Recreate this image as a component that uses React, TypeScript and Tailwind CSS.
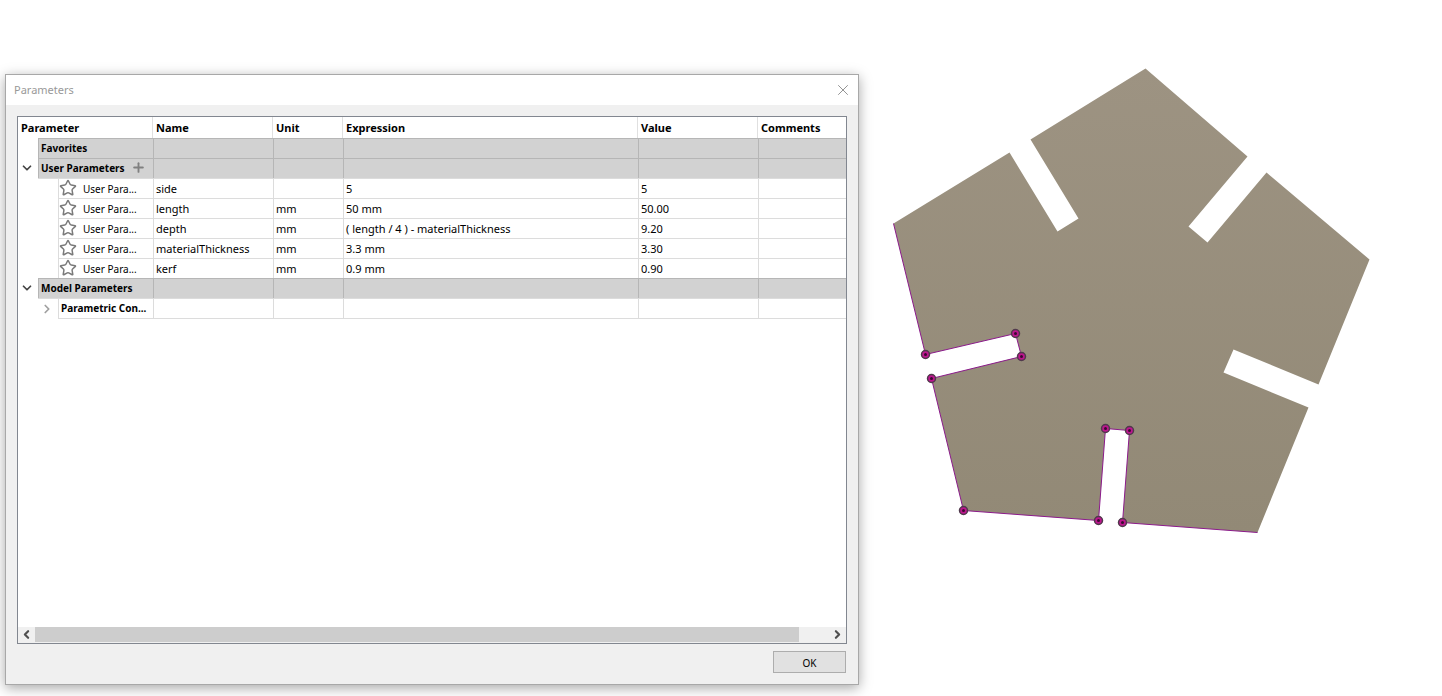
import { ChevronDown, ChevronLeft, ChevronRight, Plus, Star, X } from 'lucide-react'

interface Parameter {
  name: string
  unit: string
  expression: string
  value: string
}

const parameters: Parameter[] = [
  { name: 'side', unit: '', expression: '5', value: '5' },
  { name: 'length', unit: 'mm', expression: '50 mm', value: '50.00' },
  { name: 'depth', unit: 'mm', expression: '( length / 4 ) - materialThickness', value: '9.20' },
  { name: 'materialThickness', unit: 'mm', expression: '3.3 mm', value: '3.30' },
  { name: 'kerf', unit: 'mm', expression: '0.9 mm', value: '0.90' },
]

const headers = ['Name', 'Unit', 'Expression', 'Value', 'Comments']

// endpoints of the highlighted sketch lines
const points = [
  [925, 354],
  [1015, 333],
  [1021, 356],
  [931, 378],
  [963, 510],
  [1098, 520],
  [1105, 428],
  [1129, 430],
  [1122, 522],
]

function GroupRow({
  title,
  expandable = false,
  canAdd = false,
}: {
  title: string
  expandable?: boolean
  canAdd?: boolean
}) {
  return (
    <tr className="h-5">
      <th scope="rowgroup" className="p-0 text-left">
        <div className="flex h-5">
          <span className="flex w-5 items-center justify-center pr-0.5">
            {expandable && (
              <button type="button" aria-label={`Collapse ${title}`}>
                <ChevronDown size={14} strokeWidth={3} className="text-[#444444]" />
              </button>
            )}
          </span>
          <span className="flex flex-1 items-center gap-1.5 border-t border-l border-[#b6b6b6] bg-[#d2d2d2] pl-0.5 text-[10px]">
            {title}
            {canAdd && (
              <button type="button" aria-label="Add user parameter" className="pb-0.5">
                <Plus size={15} strokeWidth={3} className="text-[#808080]" />
              </button>
            )}
          </span>
        </div>
      </th>
      {headers.map((h) => (
        <td key={h} className="border-t border-l border-[#b6b6b6] bg-[#d2d2d2] p-0" />
      ))}
    </tr>
  )
}

function ParameterRow({ parameter, first }: { parameter: Parameter; first: boolean }) {
  const cells = [parameter.name, parameter.unit, parameter.expression, parameter.value, '']
  return (
    <tr className="h-5">
      <td className="p-0">
        <div className="flex h-5">
          <span className="w-5" />
          <span className={first ? 'w-5 border-t border-[#dcdcdc]' : 'w-5'} />
          <span className="flex flex-1 items-center gap-1.5 border-t border-l border-[#dcdcdc] text-[10px]">
            <button type="button" aria-label={`Favorite ${parameter.name}`} className="pb-0.5">
              <Star
                size={18}
                strokeWidth={2}
                strokeLinejoin="miter"
                className="text-[#7a7a7a]"
              />
            </button>
            <span className="pt-0.5">User Para...</span>
          </span>
        </div>
      </td>
      {cells.map((cell, i) => (
        <td key={headers[i]} className="border-t border-l border-[#dcdcdc] p-0 pl-0.5 leading-4">
          {cell}
        </td>
      ))}
    </tr>
  )
}

function ParameterTable() {
  return (
    <table className="w-full table-fixed border-separate border-spacing-0 text-[11px] whitespace-nowrap text-black">
      <colgroup>
        <col className="w-[135px]" />
        <col className="w-[120px]" />
        <col className="w-[70px]" />
        <col className="w-[295px]" />
        <col className="w-[120px]" />
        <col />
      </colgroup>
      <thead>
        <tr className="h-[21px] text-left">
          <th scope="col" className="border-r border-[#e0e0e0] p-0 pt-0.5 pl-[3px]">
            Parameter
          </th>
          {headers.map((h) => (
            <th
              key={h}
              scope="col"
              className="border-r border-[#e0e0e0] p-0 pt-0.5 pl-[3px] last:border-r-0"
            >
              {h}
            </th>
          ))}
        </tr>
      </thead>
      <tbody>
        <GroupRow title="Favorites" />
        <GroupRow title="User Parameters" expandable canAdd />
        {parameters.map((p, i) => (
          <ParameterRow key={p.name} parameter={p} first={i === 0} />
        ))}
        <GroupRow title="Model Parameters" expandable />
        <tr className="h-[21px]">
          <th scope="row" className="p-0 text-left">
            <div className="flex h-[21px]">
              <span className="w-5" />
              <span className="flex w-5 items-center justify-center border-t border-[#dcdcdc] pr-0.5">
                <button type="button" aria-label="Expand component">
                  <ChevronRight size={14} strokeWidth={3} className="text-[#a0a0a0]" />
                </button>
              </span>
              <span className="flex flex-1 items-center border-y border-l border-[#dcdcdc] pl-0.5 text-[10px]">
                Parametric Con...
              </span>
            </div>
          </th>
          {headers.map((h) => (
            <td key={h} className="border-y border-l border-[#dcdcdc] p-0" />
          ))}
        </tr>
      </tbody>
    </table>
  )
}

function ParametersDialog() {
  return (
    <section
      role="dialog"
      aria-labelledby="dialog-title"
      className="relative flex flex-1 flex-col border border-[#a8a8a8] bg-[#f0f0f0] shadow-[0_3px_12px_rgba(0,0,0,0.35)]"
    >
      <header className="flex h-[30px] items-center justify-between bg-white pr-1.5 pl-2">
        <h1 id="dialog-title" className="text-[11px] text-[#999999]">
          Parameters
        </h1>
        <button type="button" aria-label="Close">
          <X size={18} strokeWidth={1} className="text-[#707070]" />
        </button>
      </header>
      <div className="flex flex-1 flex-col px-[11px] pt-[11px] pb-[11px]">
        <div className="flex flex-1 flex-col justify-between border border-[#828790] bg-white">
          <ParameterTable />
          <div className="flex h-4 bg-[#f0f0f0] pb-px">
            <button
              type="button"
              aria-label="Scroll left"
              className="flex w-[17px] items-center justify-center"
            >
              <ChevronLeft size={13} strokeWidth={4} className="text-[#505050]" />
            </button>
            <div className="flex-1">
              <div className="h-full w-[96.2%] bg-[#cdcdcd]" />
            </div>
            <button
              type="button"
              aria-label="Scroll right"
              className="flex w-[17px] items-center justify-center"
            >
              <ChevronRight size={13} strokeWidth={4} className="text-[#505050]" />
            </button>
          </div>
        </div>
        <button
          type="button"
          className="mt-[7px] mr-px h-[22px] w-[73px] self-end border border-[#adadad] bg-[#e1e1e1] pt-0.5 text-[10px] text-black"
        >
          OK
        </button>
      </div>
    </section>
  )
}

function PentagonSketch() {
  return (
    <svg
      viewBox="859 0 583 696"
      className="w-full self-start"
      role="img"
      aria-label="Slotted pentagon"
    >
      <defs>
        <linearGradient id="face" x1="0" y1="0" x2="0" y2="1">
          <stop offset="0" stopColor="#9d9382" />
          <stop offset="1" stopColor="#928976" />
        </linearGradient>
      </defs>
      <g transform="translate(0.5 0.5)">
        <path
          fill="url(#face)"
          d="M1145 68 L1247 156 L1188 226 L1207 242 L1266 172 L1369 259 L1318 384 L1233 349 L1223 372 L1308 407 L1257 532 L1122 522 L1129 430 L1105 428 L1098 520 L963 510 L931 378 L1021 356 L1015 333 L925 354 L893 223 L1009 152 L1057 231 L1078 218 L1030 139 Z"
        />
        <path
          fill="none"
          stroke="#8b1a8b"
          d="M893 223 L925 354 L1015 333 L1021 356 L931 378 L963 510 L1098 520 L1105 428 L1129 430 L1122 522 L1257 532"
        />
        {points.map(([x, y]) => (
          <g key={`${x}-${y}`}>
            <circle cx={x} cy={y} r="4" fill="#bd148e" stroke="#503a4c" strokeWidth="1.5" />
            <circle cx={x} cy={y} r="1.5" fill="#3a0a30" />
          </g>
        ))}
      </g>
    </svg>
  )
}

export default function App() {
  return (
    <main className="grid min-h-screen grid-cols-[854fr_583fr] bg-white pl-[5px] font-['Noto_Sans','Open_Sans',sans-serif]">
      <div className="flex flex-col pt-[74px] pb-[11px]">
        <ParametersDialog />
      </div>
      <PentagonSketch />
    </main>
  )
}
